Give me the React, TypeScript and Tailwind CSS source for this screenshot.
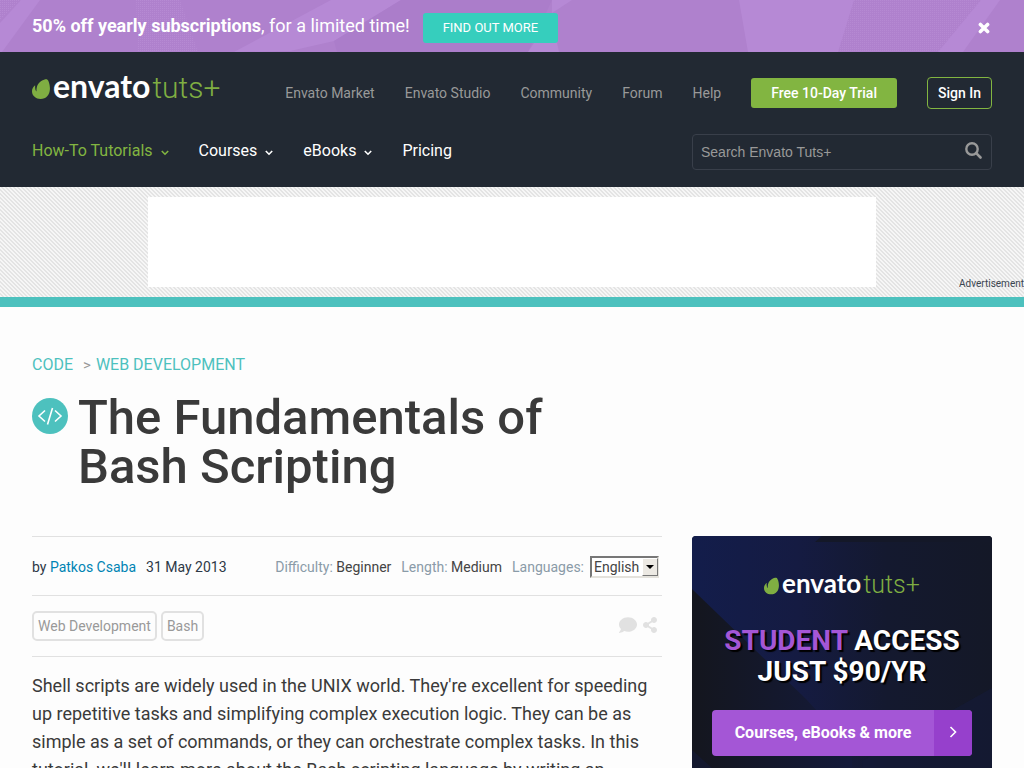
import React from "react";
import { FaComment, FaShareAlt } from "react-icons/fa";

function Leaf({ className }: { className: string }) {
  return (
    <svg viewBox="0 0 18 20" className={className} aria-hidden="true">
      <path
        fill="#7fae42"
        d="M15.2.4c-.9-.5-3.4 0-6 1.6C4.700 4.900 4.500 9.300 4.500 12c0 .3-.3.4-.5.1-.9-1.700-1-3.400-.8-5.300 0-.3-.4-.4-.6-.1C1.300 8.100 0 9.700 0 12.300 0 17 4.100 20 8.500 20c6 0 8.800-4.400 9.300-8.800C18.400 6.400 16.700 1.300 15.200.4z"
      />
    </svg>
  );
}

function Logo({ small = false }: { small?: boolean }) {
  return (
    <a
      href="#home"
      aria-label="envato tuts+"
      className={`inline-flex items-center gap-[3px] ${small ? "h-7" : "h-8"}`}
    >
      <Leaf className={small ? "mt-1 h-[18px] w-[15px]" : "mt-1 h-5 w-[18px]"} />
      <span className="flex items-baseline gap-[2px] whitespace-nowrap">
        <span
          className={`font-['Lato',sans-serif] font-bold text-white ${small ? "text-[26px] leading-7" : "text-[32px] leading-8"}`}
        >
          envato
        </span>
        <span className={`font-light text-[#7fae42] ${small ? "text-[25px] leading-7" : "text-[30px] leading-8"}`}>
          tuts+
        </span>
      </span>
    </a>
  );
}

function Caret() {
  return (
    <svg viewBox="0 0 8 6" className="mt-1 h-[6px] w-2" aria-hidden="true">
      <path d="M.8 1L4 4.200 7.200 1" fill="none" stroke="currentColor" strokeWidth="1.600" />
    </svg>
  );
}

function Banner() {
  return (
    <div className="relative h-[52px] overflow-hidden bg-[#af81cd]">
      <svg className="absolute inset-0 h-full w-full" viewBox="0 0 1024 52" preserveAspectRatio="none" aria-hidden="true">
        <defs>
          <pattern id="dots" width="2" height="2" patternUnits="userSpaceOnUse">
            <rect width="1" height="1" fill="#bd92d9" />
          </pattern>
        </defs>
        <path d="M0 0H21L0 20z" fill="url(#dots)" opacity=".5" />
        <path d="M21 0H40L2 52H0V23z" fill="#b689d5" />
        <path d="M136 0H180L198 52H138z" fill="url(#dots)" opacity=".5" />
        <path d="M234 52L331 0H401L334 41L290 51z" fill="#b689d5" />
        <path d="M290 51L334 41L401 0H552L528 52H337L334 41z" fill="#ab7dca" />
        <path d="M552 0H572L552 13zM534 43L556 38L559 52H528z" fill="#b689d5" />
        <path d="M739 0H854L838 52H748z" fill="#b689d5" />
        <path d="M854 0H981L938 52H838z" fill="url(#dots)" opacity=".45" />
        <path d="M981 0H1000L963 52H938z" fill="#b689d5" />
      </svg>
      <div className="relative flex h-full items-center px-8">
        <p className="text-[18px] leading-[52px] text-white">
          <strong className="font-bold">50% off yearly subscriptions</strong>, for a limited time!
        </p>
        <a
          href="#offer"
          className="mt-1 ml-[13px] flex h-[30px] items-center rounded-[3px] bg-[#36cebd] px-5 text-[13px] text-white"
        >
          FIND OUT MORE
        </a>
        <button type="button" aria-label="Close" className="mt-1 mr-[2px] ml-auto text-white">
          <svg viewBox="0 0 12 12" className="h-3 w-3" aria-hidden="true">
            <path d="M2.400 2.400l7.200 7.200M9.600 2.400L2.400 9.600" stroke="currentColor" strokeWidth="3.600" strokeLinecap="round" />
          </svg>
        </button>
      </div>
    </div>
  );
}

function Header() {
  return (
    <header className="flex h-[135px] flex-col bg-[#222933] px-8">
      <div className="mt-[25px] flex h-8 items-center justify-between">
        <div className="-mt-3 flex">
          <Logo />
        </div>
        <nav aria-label="Envato" className="flex items-center gap-[30px] text-[14px] text-[#999]">
          <a href="#market">Envato Market</a>
          <a href="#studio">Envato Studio</a>
          <a href="#community">Community</a>
          <a href="#forum">Forum</a>
          <a href="#help">Help</a>
          <a href="#trial" className="flex h-[30px] items-center rounded-[3px] bg-[#82b541] px-5 font-medium text-white">
            Free 10-Day Trial
          </a>
          <a href="#signin" className="flex h-8 items-center rounded-[4px] border border-[#82b541] px-[10px] font-medium text-white">
            Sign In
          </a>
        </nav>
      </div>
      <div className="mt-[25px] flex h-9 items-center justify-between">
        <nav aria-label="Main" className="-mt-[2px] flex items-center gap-[30px] text-[16px] text-white">
          <a href="#tutorials" className="flex items-center gap-2 text-[#82b541]">
            How-To Tutorials
            <Caret />
          </a>
          <a href="#courses" className="flex items-center gap-2">
            Courses
            <Caret />
          </a>
          <a href="#ebooks" className="flex items-center gap-2">
            eBooks
            <Caret />
          </a>
          <a href="#pricing">Pricing</a>
        </nav>
        <form className="flex h-9 w-[300px] items-center rounded-[4px] border border-[#393f4a] pr-[9px] pl-2">
          <input
            type="text"
            aria-label="Search Envato Tuts+"
            placeholder="Search Envato Tuts+"
            className="min-w-0 flex-1 bg-transparent font-['Liberation_Sans',sans-serif] text-[14px] text-white outline-none placeholder:text-[#999]"
          />
          <button type="button" aria-label="Search" className="-mt-1 text-[#999]">
            <svg viewBox="0 0 17 17" className="h-[17px] w-[17px]" aria-hidden="true">
              <circle cx="7" cy="7" r="5.700" fill="none" stroke="currentColor" strokeWidth="2.400" />
              <path d="M11.200 11.200l4.300 4.300" stroke="currentColor" strokeWidth="2.600" strokeLinecap="round" />
            </svg>
          </button>
        </form>
      </div>
    </header>
  );
}

function AdStrip() {
  return (
    <div className="grid grid-cols-[1fr_728px_1fr] border-b-10 border-[#4dc1be] bg-[#f6f6f6] bg-[linear-gradient(45deg,#e4e4e4_25%,transparent_25%,transparent_50%,#e4e4e4_50%,#e4e4e4_75%,transparent_75%)] bg-[length:4px_4px] py-[10px]">
      <div />
      <div className="h-[90px] bg-white" />
      <p className="flex items-end justify-end text-[10px] leading-[6px] text-[#3a4450]">Advertisement</p>
    </div>
  );
}

function Meta({ label, value }: { label: string; value: string }) {
  return (
    <span>
      <span className="text-[#8a9ba8]">{label}:</span> {value}
    </span>
  );
}

function Article() {
  return (
    <article className="min-w-0 flex-1 border-t border-[#e1e1e1]">
      <div className="flex h-[58px] items-center pt-[2px] text-[14px] text-[#2d3846]">
        <p>
          by <a href="#author" className="text-[#0084b4]">Patkos Csaba</a>
        </p>
        <time className="ml-[10px]">31 May 2013</time>
        <div className="mr-[3px] ml-auto flex items-center gap-[10px] text-[#444]">
          <Meta label="Difficulty" value="Beginner" />
          <Meta label="Length" value="Medium" />
          <div className="flex items-center gap-[6px]">
            <label htmlFor="language" className="text-[#8a9ba8]">Languages:</label>
            <div className="relative">
              <select
                id="language"
                className="block h-[22px] w-[69px] appearance-none border-2 border-t-[#777] border-r-[#e4e2dc] border-b-[#e4e2dc] border-l-[#777] bg-white pl-[2px] text-[14px] leading-[18px] text-[#444]"
              >
                <option>English</option>
              </select>
              <span className="pointer-events-none absolute top-[2px] right-[1px] flex h-[18px] w-4 items-center justify-center border border-t-white border-r-[#777] border-b-[#777] border-l-white bg-[#ece9e3]">
                <svg viewBox="0 0 8 4" className="h-1 w-2" aria-hidden="true">
                  <path d="M0 0h8L4 4z" />
                </svg>
              </span>
            </div>
          </div>
        </div>
      </div>
      <div className="flex h-[62px] items-center gap-1 border-y border-[#e1e1e1] text-[14px] text-[#999]">
        <a href="#web" className="flex h-[30px] items-center rounded-[5px] border-2 border-[#e1e1e1] px-1">Web Development</a>
        <a href="#bash" className="flex h-[30px] items-center rounded-[5px] border-2 border-[#e1e1e1] px-1">Bash</a>
        <div className="mr-1 mb-[2px] ml-auto flex items-center gap-[5px] text-[#e1e1e1]">
          <a href="#comments" aria-label="Comments"><FaComment className="h-[18px] w-[18px]" /></a>
          <a href="#share" aria-label="Share"><FaShareAlt className="h-4 w-4" /></a>
        </div>
      </div>
      <p className="pt-[15px] text-[18px] leading-[28px] text-[#3a3a3a]">
        Shell scripts are widely used in the UNIX world. They're excellent for speeding up repetitive tasks and
        simplifying complex execution logic. They can be as simple as a set of commands, or they can orchestrate
        complex tasks. In this tutorial, we'll learn more about the Bash scripting language by writing an
      </p>
    </article>
  );
}

function Promo() {
  return (
    <aside className="relative w-[300px] shrink-0 overflow-hidden rounded-[4px] bg-[#14192c]">
      <svg className="absolute inset-0 h-full w-full" viewBox="0 0 300 250" preserveAspectRatio="xMidYMin slice" aria-hidden="true">
        <defs>
          <linearGradient id="night" x1="0" x2="1">
            <stop offset="0" stopColor="#131d4b" />
            <stop offset=".35" stopColor="#151b42" />
            <stop offset=".65" stopColor="#14192f" />
            <stop offset="1" stopColor="#141827" />
          </linearGradient>
          <linearGradient id="shade" x1="0" x2="1">
            <stop offset="0" stopColor="#14161e" />
            <stop offset="1" stopColor="#141a3a" />
          </linearGradient>
        </defs>
        <path fill="url(#night)" d="M0 0h300v250H0z" />
        <path fill="#141828" d="M130 0h170v6H123z" />
        <path fill="url(#shade)" d="M0 53l114 110 46 50v37H0z" />
        <path fill="#141a38" d="M0 214l40 36H0zM170 225l130-73v98H174z" opacity=".6" />
      </svg>
      <div className="relative flex flex-col items-center px-5 pt-[34px] pb-5">
        <Logo small />
        <h2 className="mt-[27px] text-center text-[28px] leading-[31px] font-bold text-white [text-shadow:2px_2px_1px_#000]">
          <span className="text-[#a456d6]">STUDENT</span> ACCESS
          <br />
          JUST $90/YR
        </h2>
        <a href="#student" className="mt-[23px] flex h-[46px] w-full overflow-hidden rounded-[4px] bg-[#a456d6] text-[16px] font-bold text-white">
          <span className="flex flex-1 items-center justify-center">Courses, eBooks &amp; more</span>
          <span className="flex w-[38px] items-center justify-center bg-[#9640cc]">
            <svg viewBox="0 0 8 12" className="-mt-[2px] h-3 w-2" aria-hidden="true">
              <path d="M1.500 1l5 5-5 5" fill="none" stroke="currentColor" strokeWidth="1.600" />
            </svg>
          </span>
        </a>
      </div>
    </aside>
  );
}

export default function App() {
  return (
    <div className="min-h-screen bg-[#fdfdfd] font-['Roboto',sans-serif]">
      <Banner />
      <Header />
      <AdStrip />
      <main className="px-8 pt-[46px]">
        <nav aria-label="Breadcrumb" className="flex items-center text-[16px] leading-6 text-[#4dc1be]">
          <a href="#code">CODE</a>
          <span className="mr-[5px] ml-[10px] text-[15px] text-[#999]">&gt;</span>
          <a href="#webdev">WEB DEVELOPMENT</a>
        </nav>
        <div className="mt-4 flex gap-[10px]">
          <svg viewBox="0 0 36 36" className="mt-[5px] h-9 w-9 shrink-0" aria-hidden="true">
            <circle cx="18" cy="18" r="18" fill="#4dc1be" />
            <path d="M13 12.500L7 18l6 5.500M23 12.500l6 5.500-6 5.500M20.500 10l-5 16.500" fill="none" stroke="#fff" strokeWidth="1.600" />
          </svg>
          <h1 className="max-w-[580px] text-[49px] leading-[49px] font-medium text-[#3a3a3a]">
            The Fundamentals of
            <br />
            Bash Scripting
          </h1>
        </div>
        <div className="mt-[45px] flex gap-[30px]">
          <Article />
          <Promo />
        </div>
      </main>
    </div>
  );
}
